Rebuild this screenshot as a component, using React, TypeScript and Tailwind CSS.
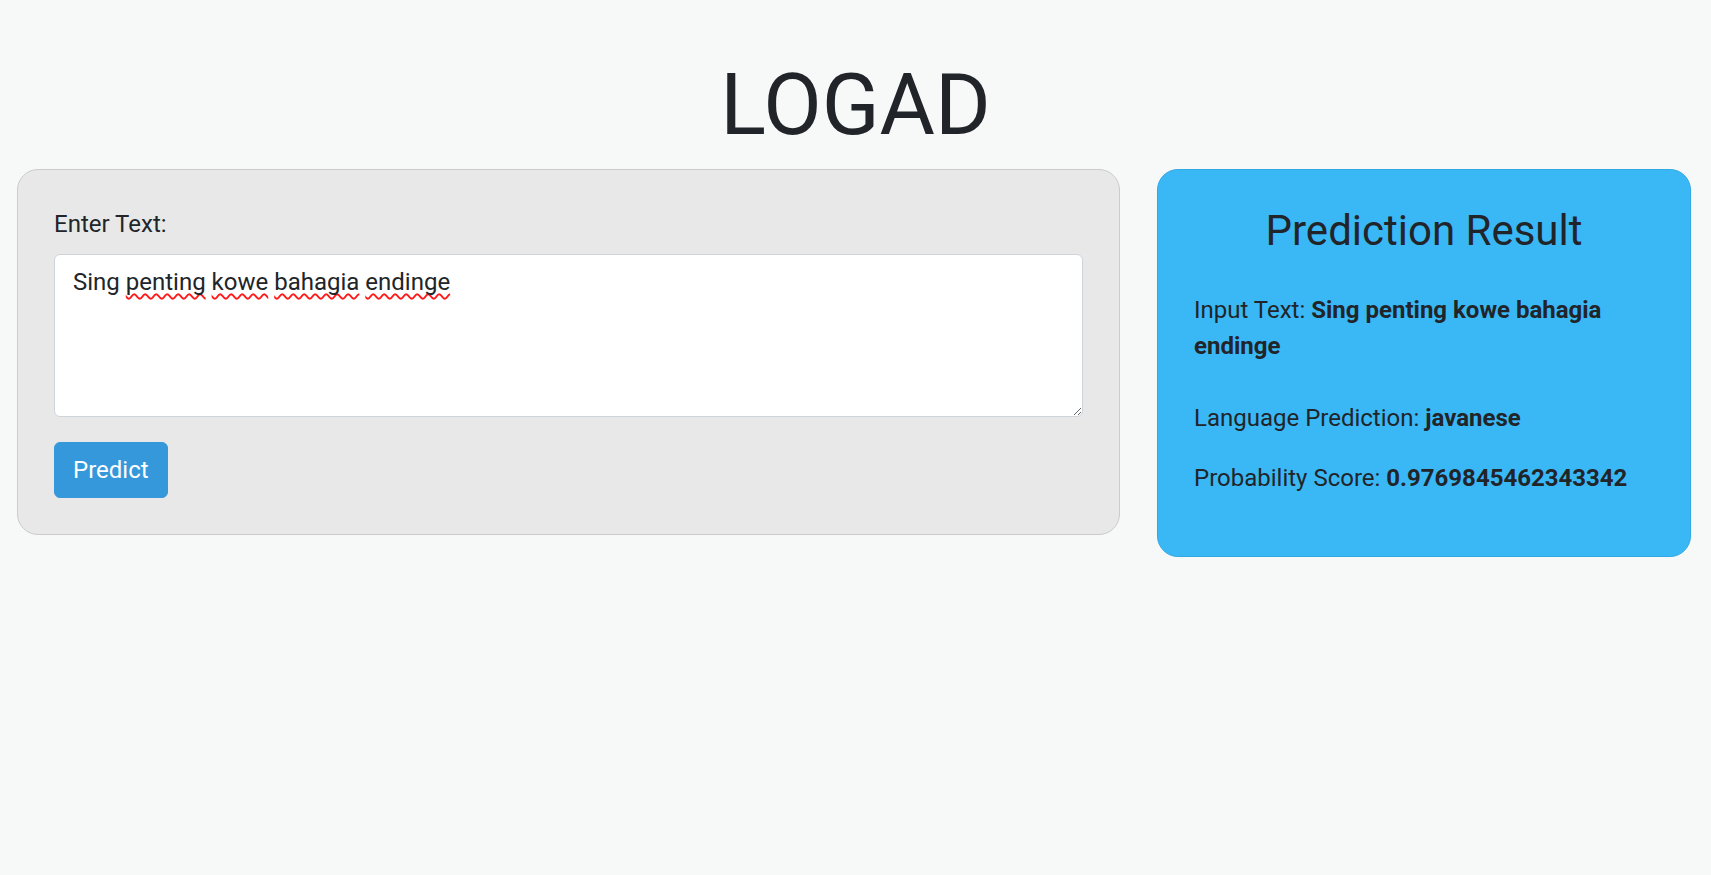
const words = ['penting', 'kowe', 'bahagia', 'endinge']

function Misspelled({ word }: { word: string }) {
  return (
    <span className="underline decoration-wavy decoration-[#ff1a1a] decoration-[1.5px] underline-offset-[3px] [text-decoration-skip-ink:none]">
      {word}
    </span>
  )
}

export default function App() {
  return (
    <div
      className="min-h-[875px] w-full bg-[#f7f8f8] text-[#212529]"
      style={{ fontFamily: 'Roboto, "Liberation Sans", sans-serif' }}
    >
      <h1 className="pt-[54px] text-center text-[85px] font-normal leading-[102px]">LOGAD</h1>

      <div className="mt-[13px] flex items-start gap-[37px] pl-[17px]">
        {/* input form */}
        <div className="w-[1103px] rounded-[21px] border-[1.5px] border-[#cccccc] bg-[#e8e8e8] p-[36px]">
          <label className="mb-[12px] block text-[24px] leading-[36px]">Enter Text:</label>
          <div className="h-[163px] w-full resize overflow-auto rounded-[6px] border-[1.5px] border-[#ced4da] bg-white px-[18px] py-[9px] text-[24px] leading-[36px]">
            Sing{' '}
            {words.map((w, i) => (
              <span key={w}>
                <Misspelled word={w} />
                {i < words.length - 1 ? ' ' : ''}
              </span>
            ))}
          </div>
          <button
            type="button"
            className="mt-[25px] block h-[56px] rounded-[6px] border-[1.5px] border-[#3498db] bg-[#3498db] px-[18px] text-[24px] leading-[36px] text-white"
          >
            Predict
          </button>
        </div>

        {/* result */}
        <div className="w-[534px] rounded-[21px] border-[1.5px] border-[#33a9e3] bg-[#3ab8f5] px-[36px] pb-[36px] pt-[36px]">
          <h3 className="mb-[36px] text-center text-[42px] font-normal leading-[50px]">Prediction Result</h3>
          <p className="mb-[36px] text-[24px] leading-[36px]">
            Input Text: <b className="font-bold">Sing penting kowe bahagia endinge</b>
          </p>
          <p className="mb-[24px] text-[24px] leading-[36px]">
            Language Prediction: <b className="font-bold">javanese</b>
          </p>
          <p className="mb-[24px] text-[24px] leading-[36px]">
            Probability Score: <b className="font-bold">0.9769845462343342</b>
          </p>
        </div>
      </div>
    </div>
  )
}
